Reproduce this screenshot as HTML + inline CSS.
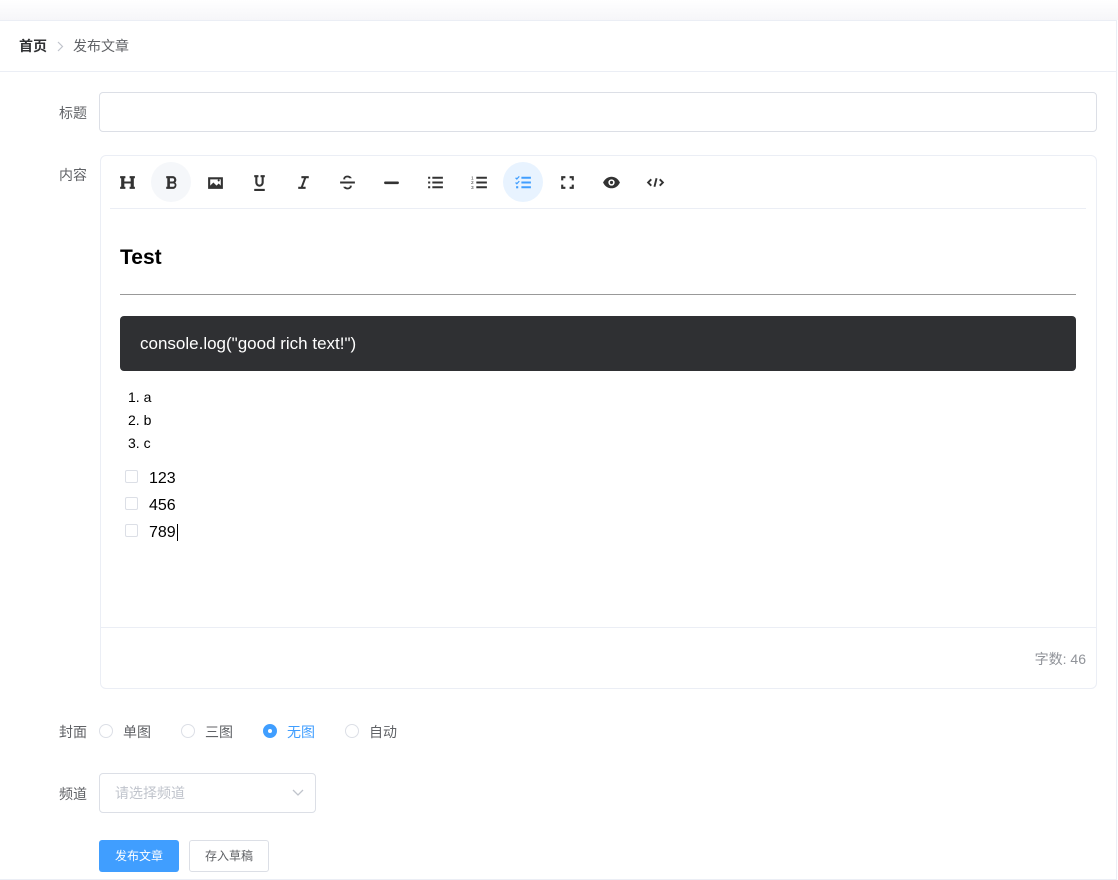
<!DOCTYPE html>
<html><head><meta charset="utf-8"><style>
*{box-sizing:border-box;margin:0;padding:0}
body{width:1118px;height:873px;background:#fff;font-family:"Liberation Sans","Noto Sans CJK SC",sans-serif;position:relative;overflow:hidden;color:#606266}
.top{position:absolute;left:0;top:0;width:1118px;height:20px;background:linear-gradient(#fff,#f6f6f9)}
.card{position:absolute;left:0;top:20px;width:1117px;height:860px;border:1px solid #ebeef5;border-left:none;background:#fff}
.bc{position:absolute;left:0;top:0;width:1117px;height:51px;border-bottom:1px solid #ebeef5;font-size:14px;line-height:51px;padding-left:19px}
.bc b{color:#303133}
.lbl{position:absolute;font-size:14px;color:#606266;width:87px;text-align:right}
.inp{position:absolute;border:1px solid #dcdfe6;border-radius:4px}
.ed{position:absolute;left:100px;top:155px;width:997px;height:534px;border:1px solid #ebeef5;border-radius:6px}
.ic{position:absolute;top:162px;width:40px;height:40px;border-radius:50%;display:flex;align-items:center;justify-content:center}
.ic svg{width:19px;height:19px}
.cb{position:absolute;left:125px;width:13px;height:13px;border:1px solid #dcdfe6;border-radius:2px}
.t{position:absolute;font-size:16px;color:#000}
.r{position:absolute;top:724px;width:14px;height:14px;border:1px solid #dcdfe6;border-radius:50%}
.rt{position:absolute;top:722px;font-size:14px}
</style></head><body>
<div class="top"></div>
<div class="card"><div class="bc"><b>首页</b><svg style="margin:0 9px 0 10px;vertical-align:-1px" width="7" height="11" viewBox="0 0 7 11"><path d="M1 1l4.5 4.5L1 10" stroke="#c0c4cc" fill="none" stroke-width="1.2"/></svg>发布文章</div></div>
<div class="lbl" style="left:0;top:103px">标题</div>
<div class="inp" style="left:99px;top:92px;width:998px;height:40px"></div>
<div class="lbl" style="left:0;top:165px">内容</div>
<div class="ed"></div>
<div style="position:absolute;left:110px;top:208px;width:976px;height:1px;background:#ebeef5"></div>
<div style="position:absolute;left:100px;top:627px;width:997px;height:1px;background:#ebeef5"></div>
<div style="position:absolute;right:32px;top:649px;font-size:14px;color:#909399">字数: 46</div>
<div class="ic" style="left:107px"><svg viewBox="0 0 18 18"><path d="M2 3h5v2H6v3h6V5h-1V3h5v2h-1v8h1v2h-5v-2h1v-3H6v3h1v2H2v-2h1V5H2z" fill="#333"/></svg></div>
<div class="ic" style="left:151px;background:#f5f7fa"><svg viewBox="0 0 18 18"><path d="M4 3h6a3.5 3.5 0 0 1 2.5 6A3.5 3.5 0 0 1 11 15H4v-2h1V5H4zm3.5 2v3h2.5a1.5 1.5 0 0 0 0-3zm0 5v3h3a1.5 1.5 0 0 0 0-3z" fill="#333"/></svg></div>
<div class="ic" style="left:195px"><svg viewBox="0 0 18 18"><path d="M2 4h14v11H2zm2 2v6l3-3 3 3 2-2 2 2V6zm7 1a1 1 0 1 0 2 0 1 1 0 1 0-2 0" fill="#333"/></svg></div>
<div class="ic" style="left:239px"><svg viewBox="0 0 18 18"><path d="M4 2h4v2H7v5a2 2 0 0 0 4 0V4h-1V2h4v2h-1v5a4 4 0 0 1-8 0V4H4zm0 13h10v2H4z" fill="#333"/></svg></div>
<div class="ic" style="left:283px"><svg viewBox="0 0 18 18"><path d="M7 3h7v2h-2.5l-3 8H11v2H4v-2h2.5l3-8H7z" fill="#333"/></svg></div>
<div class="ic" style="left:327px"><svg viewBox="0 0 18 18"><path d="M2 8h14v2H2z M5 6a4 3 0 0 1 8-1h-2.3a2 1.3 0 0 0-3.7 1z M13 12a4 3 0 0 1-8 1h2.3a2 1.3 0 0 0 3.7-1z" fill="#333"/></svg></div>
<div class="ic" style="left:371px"><svg viewBox="0 0 18 18"><rect x="2" y="8" width="14" height="2.5" rx="1" fill="#333"/></svg></div>
<div class="ic" style="left:415px"><svg viewBox="0 0 18 18"><path d="M6 3.5h10v2H6zm0 4.5h10v2H6zm0 4.5h10v2H6zM2 3.5h2v2H2zm0 4.5h2v2H2zm0 4.5h2v2H2z" fill="#333"/></svg></div>
<div class="ic" style="left:459px"><svg viewBox="0 0 18 18"><path d="M6 3.5h10v2H6zm0 4.5h10v2H6zm0 4.5h10v2H6z" fill="#333"/><text x="1" y="6" font-size="4.5" fill="#333">1</text><text x="1" y="10.5" font-size="4.5" fill="#333">2</text><text x="1" y="15" font-size="4.5" fill="#333">3</text></svg></div>
<div class="ic" style="left:503px;background:#e8f3ff"><svg viewBox="0 0 18 18"><path d="M7 3.5h9v2H7zm0 4.5h9v2H7zm0 4.5h9v2H7z" fill="#409eff"/><path d="M1.5 4.5l1.2 1.2 2.3-2.5M1.5 9l1.2 1.2 2.3-2.5" stroke="#409eff" fill="none" stroke-width="1.2"/><rect x="2" y="12.5" width="2" height="2" fill="#409eff"/></svg></div>
<div class="ic" style="left:547px"><svg viewBox="0 0 18 18"><path d="M3 3h4v2H5v2H3zm8 0h4v4h-2V5h-2zM3 11h2v2h2v2H3zm10 0h2v4h-4v-2h2z" fill="#333"/></svg></div>
<div class="ic" style="left:591px"><svg viewBox="0 0 18 18"><path d="M1 9c2-4 5-5.5 8-5.5s6 1.5 8 5.5c-2 4-5 5.5-8 5.5S3 13 1 9z" fill="#333"/><circle cx="9" cy="9" r="3" fill="#fff"/><circle cx="9" cy="9" r="1.5" fill="#333"/></svg></div>
<div class="ic" style="left:635px"><svg viewBox="0 0 18 18"><path d="M5 6L2 9l3 3M13 6l3 3-3 3M10 5l-2 8" stroke="#333" stroke-width="1.8" fill="none"/></svg></div>
<div style="position:absolute;left:120px;top:246px;font-size:21px;font-weight:bold;color:#000">Test</div>
<div style="position:absolute;left:120px;top:294px;width:956px;height:1px;background:#999"></div>
<div style="position:absolute;left:120px;top:316px;width:956px;height:55px;background:#2f3033;border-radius:4px;color:#fff;font-size:17px;line-height:55px;padding-left:20px">console.log("good rich text!")</div>
<div style="position:absolute;left:128px;top:386px;font-size:14px;line-height:23px;color:#000">1. a<br>2. b<br>3. c</div>
<div class="cb" style="top:470px"></div><div class="t" style="left:149px;top:470px">123</div>
<div class="cb" style="top:497px"></div><div class="t" style="left:149px;top:497px">456</div>
<div class="cb" style="top:524px"></div><div class="t" style="left:149px;top:524px">789<span style="border-left:1px solid #000;margin-left:1px"></span></div>
<div class="lbl" style="left:0;top:722px">封面</div>
<div class="r" style="left:99px"></div><div class="rt" style="left:123px">单图</div>
<div class="r" style="left:181px"></div><div class="rt" style="left:205px">三图</div>
<div class="r" style="left:263px;background:#409eff;border-color:#409eff"><div style="width:4px;height:4px;background:#fff;border-radius:50%;margin:4px"></div></div><div class="rt" style="left:287px;color:#409eff">无图</div>
<div class="r" style="left:345px"></div><div class="rt" style="left:369px">自动</div>
<div class="lbl" style="left:0;top:784px">频道</div>
<div class="inp" style="left:99px;top:773px;width:217px;height:40px;font-size:14px;color:#c0c4cc;line-height:38px;padding-left:15px">请选择频道<svg style="position:absolute;right:11px;top:14px" width="12" height="10" viewBox="0 0 12 10"><path d="M1 2l5 5 5-5" stroke="#c0c4cc" fill="none" stroke-width="1.3"/></svg></div>
<div style="position:absolute;left:99px;top:840px;width:80px;height:32px;background:#409eff;border-radius:3px;color:#fff;font-size:12px;line-height:32px;text-align:center">发布文章</div>
<div style="position:absolute;left:189px;top:840px;width:80px;height:32px;border:1px solid #dcdfe6;border-radius:3px;color:#606266;font-size:12px;line-height:30px;text-align:center">存入草稿</div>
</body></html>
